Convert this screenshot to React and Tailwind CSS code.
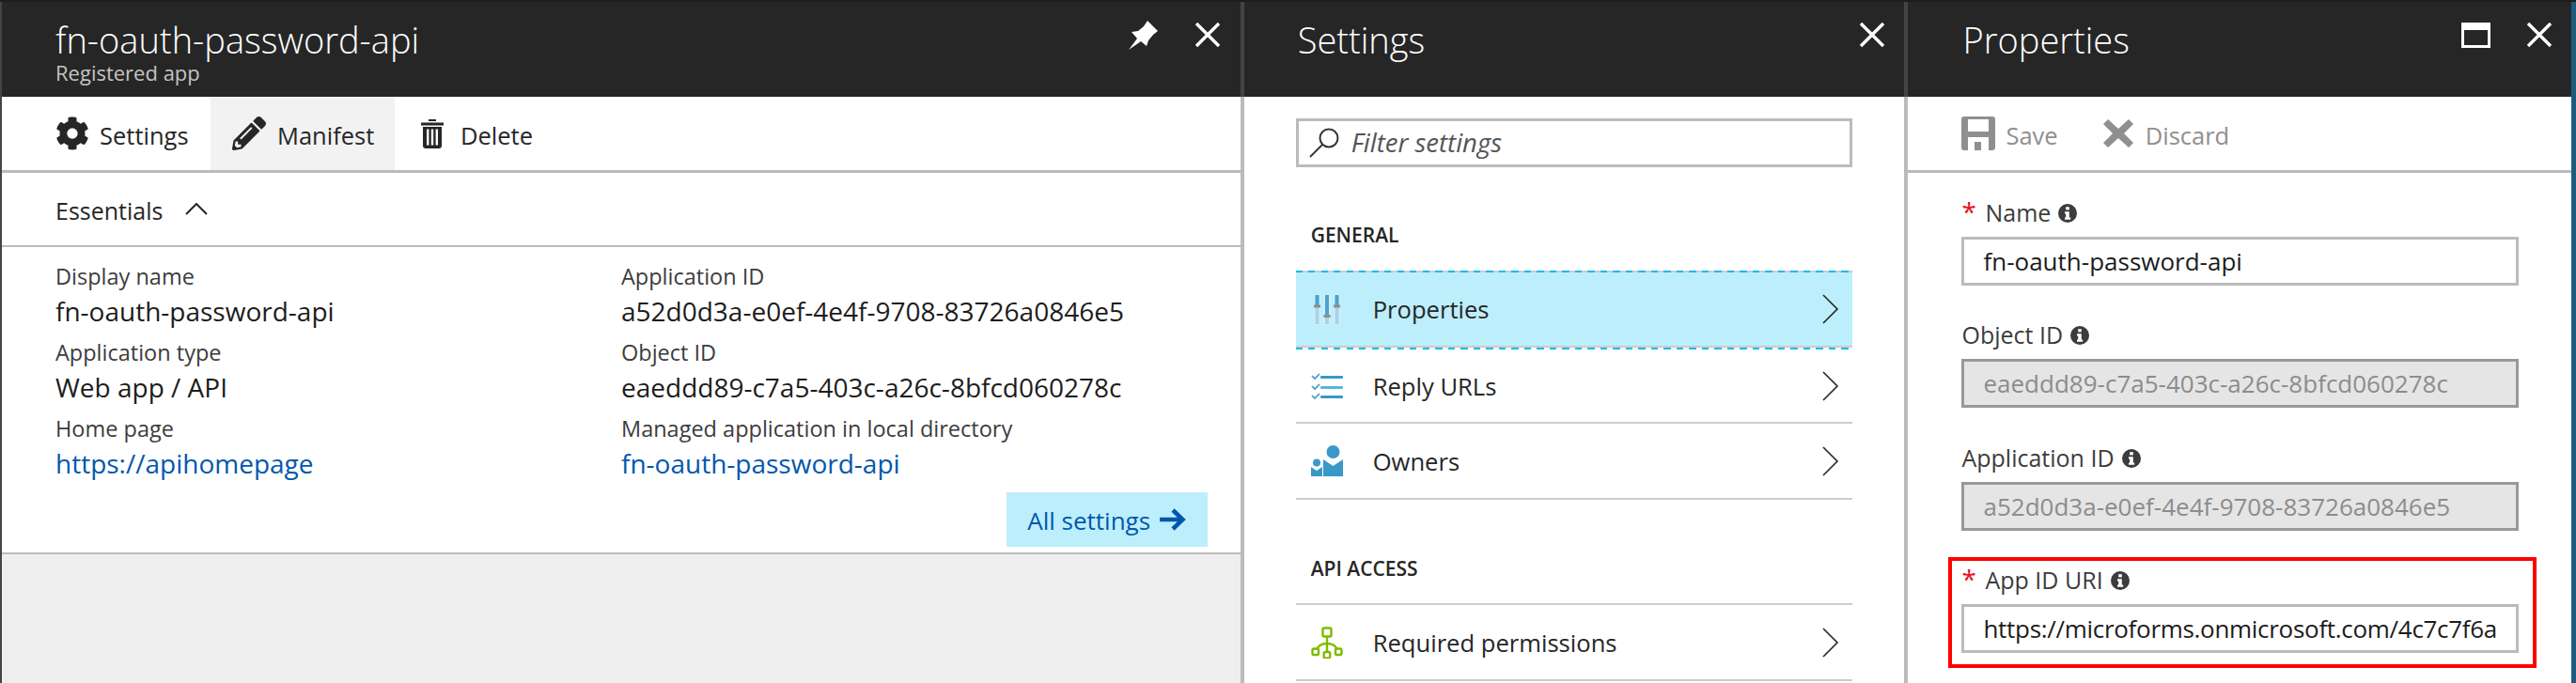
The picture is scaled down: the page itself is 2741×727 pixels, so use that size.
import React from "react";
import { FaCog, FaPencilAlt } from "react-icons/fa";

const font = "font-['Open_Sans','Liberation_Sans',sans-serif]";

const CloseIcon = ({ className = "" }) => (
  <svg viewBox="0 0 28 28" className={`w-[28px] h-[28px] ${className}`}>
    <path d="M2 2 L26 26 M26 2 L2 26" stroke="#fff" strokeWidth="3.4" fill="none" />
  </svg>
);

const PinIcon = () => (
  <svg viewBox="0 0 31 31" className="w-[31px] h-[31px] mr-[39px] -mt-[1px]">
    <path d="M0 31 L9 19 L3 12 L10 11 L16 6 L20 0 L31 11 L26 15 L21 21 L19 27 L13 22 Z" fill="#fff" />
  </svg>
);

const InfoIcon = () => (
  <svg viewBox="0 0 20 20" className="w-[20px] h-[20px] shrink-0">
    <circle cx="10" cy="10" r="10" fill="#3c3c3c" />
    <rect x="8.2" y="3.2" width="3.6" height="3.2" fill="#fff" />
    <path d="M7 8.2h4.8v6.4h1.4v2.2H7v-2.2h1.2v-4.2H7z" fill="#fff" />
  </svg>
);

const TrashIcon = () => (
  <svg viewBox="0 0 24 31" className="w-[24px] h-[31px]">
    <path d="M8 0h8v2h-8zM0 3.5h24v3H0z" fill="#262626" />
    <path d="M2 8h20v20a3 3 0 0 1-3 3H5a3 3 0 0 1-3-3z" fill="#262626" />
    <path d="M6 10.5h2.4v17H6zM10.8 10.5h2.4v17h-2.4zM15.6 10.5H18v17h-2.4z" fill="#fff" />
  </svg>
);

const SaveIcon = () => (
  <svg viewBox="0 0 36 36" className="w-[36px] h-[36px]">
    <path
      d="M3 0h30a3 3 0 0 1 3 3v30a3 3 0 0 1-3 3H3a3 3 0 0 1-3-3V3a3 3 0 0 1 3-3z M7 3v13h22V3z M7 22v14h22V22z"
      fill="#8f8f8f"
      fillRule="evenodd"
    />
    <rect x="14" y="27" width="7" height="9" fill="#8f8f8f" />
  </svg>
);

const DiscardIcon = () => (
  <svg viewBox="0 0 32 32" className="w-[32px] h-[32px]">
    <path d="M5 1 L16 11 L27 1 L32 6 L22 16 L32 26 L27 31 L16 21 L5 31 L0 26 L10 16 L0 6 Z" fill="#8f8f8f" />
  </svg>
);

const SearchIcon = () => (
  <svg viewBox="0 0 32 32" className="w-[32px] h-[32px] shrink-0">
    <circle cx="21" cy="11" r="9.5" stroke="#333" strokeWidth="2" fill="none" />
    <path d="M14 18 L1 31" stroke="#333" strokeWidth="1.8" fill="none" />
  </svg>
);

const ChevronRight = () => (
  <svg viewBox="0 0 18 32" className="w-[18px] h-[32px]">
    <path d="M1 1 L16 16 L1 31" stroke="#262626" strokeWidth="1.6" fill="none" />
  </svg>
);

const SlidersIcon = () => (
  <svg viewBox="0 0 28 33" className="w-[28px] h-[33px]">
    <rect x="0" y="0" width="7" height="33" fill="#d3eef6" />
    <rect x="10.5" y="0" width="7" height="33" fill="#d3eef6" />
    <rect x="21" y="0" width="7" height="33" fill="#d3eef6" />
    <rect x="1.5" y="1" width="4" height="31" fill="#a5d4e8" />
    <rect x="12" y="1" width="4" height="31" fill="#a5d4e8" />
    <rect x="22.5" y="1" width="4" height="31" fill="#a5d4e8" />
    <rect x="1.5" y="1" width="4" height="12" fill="#4aa3cf" />
    <rect x="12" y="1" width="4" height="23" fill="#4aa3cf" />
    <rect x="22.5" y="1" width="4" height="12" fill="#4aa3cf" />
    <rect x="0" y="11.5" width="7" height="3" fill="#8e8e8e" />
    <rect x="10.5" y="22" width="7" height="3" fill="#8e8e8e" />
    <rect x="21" y="11.5" width="7" height="3" fill="#8e8e8e" />
  </svg>
);

const ChecklistIcon = () => (
  <svg viewBox="0 0 34 28" className="w-[34px] h-[28px]">
    <path d="M1 3 L4 6 L9 1 M1 14 L4 17 L9 12 M1 24 L4 27 L9 22" stroke="#3999c6" strokeWidth="1.6" fill="none" />
    <rect x="10" y="3" width="24" height="3" rx="1" fill="#3999c6" />
    <rect x="10" y="14" width="24" height="3" rx="1" fill="#59b4d9" />
    <rect x="10" y="24" width="24" height="3" rx="1" fill="#3999c6" />
  </svg>
);

const OwnersIcon = () => (
  <svg viewBox="0 0 34 33" className="w-[34px] h-[33px]">
    <circle cx="23.5" cy="7" r="7" fill="#3999c6" />
    <path d="M13 15 L23.5 22 L34 15 V33 H13 Z" fill="#3999c6" />
    <circle cx="6" cy="18.5" r="4" fill="#3999c6" />
    <path d="M0 23 L6 27 L12 23 V33 H0 Z" fill="#3999c6" />
  </svg>
);

const PermissionsIcon = () => (
  <svg viewBox="0 0 34 34" className="w-[34px] h-[34px]">
    <g stroke="#7fba00" strokeWidth="2.4" fill="none">
      <rect x="12.5" y="1.5" width="9" height="9" rx="1.5" />
      <path d="M17 10.5 V27" />
      <path d="M6 24 C8 20 12 18 17 18 C22 18 26 20 28 24" />
      <rect x="1.5" y="23.5" width="6.5" height="6.5" rx="1.5" />
      <rect x="13.7" y="27" width="6.5" height="6.5" rx="1.5" />
      <rect x="26" y="23.5" width="6.5" height="6.5" rx="1.5" />
    </g>
  </svg>
);

const PanelHeader = ({ title, subtitle, children }) => (
  <div className="h-[101px] bg-[#262626] flex justify-between shrink-0">
    <div>
      <div className="text-[38px] leading-[46px] mt-[17px] font-light text-white">{title}</div>
      {subtitle && <div className="text-[22px] leading-[24px] text-[#c4c4c4]">{subtitle}</div>}
    </div>
    <div className="flex items-start pt-[21px]">{children}</div>
  </div>
);

const Detail = ({ label, value, link }) => (
  <div className="mb-[7px]">
    <div className="h-[36px] leading-[36px] text-[23.5px] text-[#3c3c3c]">{label}</div>
    <div className={`h-[38px] leading-[38px] text-[28px] ${link ? "text-[#0058ad]" : "text-[#1c1c1c]"}`}>{value}</div>
  </div>
);

const ToolButton = ({ icon, label, disabled, className = "gap-[11px]" }) => (
  <div className={`h-full flex items-center ${className}`}>
    {icon}
    <span className={`text-[25.5px] pt-[4px] ${disabled ? "text-[#8f8f8f]" : "text-[#262626]"}`}>{label}</span>
  </div>
);

const MenuRow = ({ icon, label, height }) => (
  <div className={`flex items-center border-b-2 border-[#cdcdcd] pr-[14px] ${height}`}>
    <div className="w-[82px] flex justify-center pr-[15px]">{icon}</div>
    <span className="text-[25.6px] pt-[3px] text-[#262626] flex-1">{label}</span>
    <ChevronRight />
  </div>
);

const Field = ({ label, required, value, disabled, mb = "", textClass = "" }) => (
  <div className={mb}>
    <div className="h-[38px] flex items-center gap-[8px]">
      {required && <span className="text-[28px] leading-[28px] h-[28px] w-[17px] text-[#e81123] -mt-[4px]">*</span>}
      <span className="text-[25px] text-[#3c3c3c]">{label}</span>
      <InfoIcon />
    </div>
    <div
      className={`mt-[6px] h-[52px] flex items-center px-[20px] border-[3px] text-[26px] whitespace-nowrap overflow-hidden ${textClass} ${
        disabled ? "bg-[#e5e5e5] border-[#999] text-[#8c8c8c]" : "bg-white border-[#bbb] text-[#1c1c1c]"
      }`}
    >
      {value}
    </div>
  </div>
);

export default function App() {
  return (
    <div className={`${font} w-[2741px] h-[727px] overflow-hidden bg-white flex flex-col`}>
      <div className="h-[2px] bg-[#1d1d1d] shrink-0" />
      <div className="flex flex-1 min-h-0">
        {/* app blade */}
        <div className="w-[1324px] flex flex-col border-l-2 border-l-[#444]">
          <div className="pl-[57px] pr-[21px] bg-[#262626] border-r-4 border-[#444]">
            <PanelHeader title="fn-oauth-password-api" subtitle="Registered app">
              <PinIcon />
              <CloseIcon />
            </PanelHeader>
          </div>
          <div className="flex-1 min-h-0 flex flex-col border-r-4 border-[#bbb]">
            <div className="h-[78px] flex items-center pl-[57px] shrink-0">
              <ToolButton icon={<FaCog className="w-[36px] h-[36px] text-[#262626]" />} label="Settings" className="w-[165px] gap-[11px]" />
              <ToolButton icon={<FaPencilAlt className="w-[36px] h-[36px] text-[#262626]" />} label="Manifest" className="w-[196px] gap-[12px] pl-[23px] bg-[#f2f2f2]" />
              <div className="w-[28px] h-full" />
              <ToolButton icon={<TrashIcon />} label="Delete" className="gap-[18px]" />
            </div>
            <div className="h-[82px] border-t-[3px] border-b-2 border-[#bbb] flex items-center pl-[57px] gap-[24px] shrink-0">
              <span className="text-[25px] pt-[4px] text-[#262626]">Essentials</span>
              <svg viewBox="0 0 24 13" className="w-[24px] h-[13px]">
                <path d="M1 12 L12 1 L23 12" stroke="#262626" strokeWidth="2" fill="none" />
              </svg>
            </div>
            <div className="pt-[13px] pb-[6px] pl-[57px] pr-[35px] border-b-2 border-[#bbb] shrink-0">
              <div className="grid grid-cols-[602px_1fr]">
                <div>
                  <Detail label="Display name" value="fn-oauth-password-api" />
                  <Detail label="Application type" value="Web app / API" />
                  <Detail label="Home page" value="https://apihomepage" link />
                </div>
                <div>
                  <Detail label="Application ID" value="a52d0d3a-e0ef-4e4f-9708-83726a0846e5" />
                  <Detail label="Object ID" value="eaeddd89-c7a5-403c-a26c-8bfcd060278c" />
                  <Detail label="Managed application in local directory" value="fn-oauth-password-api" link />
                </div>
              </div>
              <div className="flex justify-end mt-[5px]">
                <div className="w-[214px] h-[58px] bg-[#bdeefb] flex items-center justify-center gap-[10px]">
                  <span className="text-[26px] pt-[3px] text-[#0058ad]">All settings</span>
                  <svg viewBox="0 0 28 26" className="w-[28px] h-[26px]">
                    <path d="M0 13 H24 M14 3 L24.5 13 L14 23" stroke="#0058ad" strokeWidth="4.5" fill="none" />
                  </svg>
                </div>
              </div>
            </div>
            <div className="flex-1 bg-[#eee]" />
          </div>
        </div>

        {/* settings blade */}
        <div className="w-[707px] flex flex-col">
          <div className="pl-[57px] pr-[20px] bg-[#262626] border-r-4 border-[#444]">
            <PanelHeader title="Settings">
              <CloseIcon />
            </PanelHeader>
          </div>
          <div className="flex-1 min-h-0 px-[55px] pt-[23px] border-r-4 border-[#bbb]">
            <div className="h-[52px] border-[3px] border-[#bbb] flex items-center pl-[11px] gap-[13px]">
              <SearchIcon />
              <span className="italic text-[27.5px] text-[#555]">Filter settings</span>
            </div>
            <div className="h-[110px] pt-[48px] pl-[16px] leading-[48px] text-[21px] font-semibold text-[#262626]">GENERAL</div>
            <div className="h-[2px] bg-[repeating-linear-gradient(90deg,#00bcf2_0_7px,#ccc_7px_13.5px)]" />
            <div className="h-[80px] bg-[#bdeefb] border-b-2 border-[#cdcdcd] flex items-center pr-[14px]">
              <div className="w-[82px] flex justify-center pr-[15px]"><SlidersIcon /></div>
              <span className="text-[25.6px] pt-[3px] text-[#262626] flex-1">Properties</span>
              <ChevronRight />
            </div>
            <div className="h-[2px] bg-[repeating-linear-gradient(90deg,#00bcf2_0_7px,#fff_7px_13.5px)]" />
            <MenuRow icon={<ChecklistIcon />} label="Reply URLs" height="h-[79px]" />
            <MenuRow icon={<OwnersIcon />} label="Owners" height="h-[81px]" />
            <div className="h-[112px] pt-[49px] pl-[16px] leading-[48px] text-[21px] font-semibold text-[#262626] border-b-2 border-[#cdcdcd]">API ACCESS</div>
            <MenuRow icon={<PermissionsIcon />} label="Required permissions" height="h-[81px]" />
          </div>
        </div>

        {/* properties blade */}
        <div className="flex-1 flex flex-col">
          <div className="pl-[58px] pr-[20px] bg-[#262626]">
            <PanelHeader title="Properties">
              <div className="w-[31px] h-[27px] border-[3px] border-t-[8px] border-white mr-[38px] mt-[1px]" />
              <CloseIcon />
            </PanelHeader>
          </div>
          <div className="h-[78px] flex items-center pl-[57px] gap-[48px] shrink-0">
            <ToolButton icon={<SaveIcon />} label="Save" disabled />
            <ToolButton icon={<DiscardIcon />} label="Discard" disabled className="gap-[13px]" />
          </div>
          <div className="border-t-[3px] border-[#bbb] pt-[24px] pl-[57px] pr-[56px]">
            <Field label="Name" required value="fn-oauth-password-api" mb="mb-[34px]" />
            <Field label="Object ID" value="eaeddd89-c7a5-403c-a26c-8bfcd060278c" disabled mb="mb-[35px]" />
            <Field label="Application ID" value="a52d0d3a-e0ef-4e4f-9708-83726a0846e5" disabled mb="mb-[28px]" />
            <div className="-ml-[14px] -mr-[19px] border-4 border-[#f00] pl-[10px] pr-[15px] pt-[2px] pb-[12px]">
              <Field label="App ID URI" required value="https://microforms.onmicrosoft.com/4c7c7f6a" textClass="tracking-[-0.3px]" />
            </div>
          </div>
        </div>

        <div className="w-[5px] bg-[#1f5b7d] shrink-0" />
      </div>
    </div>
  );
}
